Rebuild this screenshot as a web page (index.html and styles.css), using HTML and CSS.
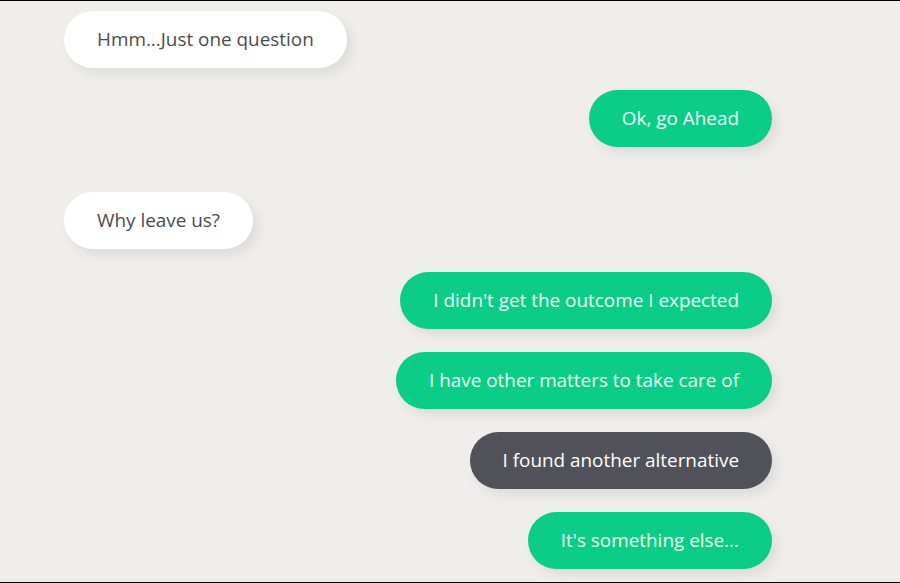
FILE: index.html
```html
<!DOCTYPE html>
<html>
<head>
<meta charset="utf-8">
<link rel="stylesheet" href="styles.css">
</head>
<body>
<div class="frame">
  <div class="chat">
    <div class="row left first"><div class="bubble bot">Hmm...Just one question</div></div>
    <div class="row right second"><div class="bubble user">Ok, go Ahead</div></div>
    <div class="row left"><div class="bubble bot">Why leave us?</div></div>
    <div class="row right"><div class="bubble user">I didn't get the outcome I expected</div></div>
    <div class="row right"><div class="bubble user">I have other matters to take care of</div></div>
    <div class="row right"><div class="bubble dark">I found another alternative</div></div>
    <div class="row right"><div class="bubble user">It's something else...</div></div>
  </div>
</div>
</body>
</html>
```
FILE: styles.css
```css
html, body {
  margin: 0;
  padding: 0;
}
body {
  width: 900px;
  height: 583px;
  overflow: hidden;
  background: #efeeec;
}
.frame {
  box-sizing: border-box;
  height: 583px;
  border-top: 1px solid #000;
  border-bottom: 1px solid #000;
  background: #efeeec;
}
.chat {
  display: flex;
  flex-direction: column;
  padding: 10px 128px 0 64px;
  font-family: "Open Sans", sans-serif;
  font-size: 18.9px;
  font-weight: 500;
}
.row {
  display: flex;
  margin-bottom: 23px;
}
.row.first { margin-bottom: 22px; }
.row.second { margin-bottom: 45px; }
.left { justify-content: flex-start; }
.right { justify-content: flex-end; }
.bubble {
  height: 57px;
  box-sizing: border-box;
  display: flex;
  align-items: center;
  padding: 0 33px 1px;
  border-radius: 29px;
  box-shadow: 5px 6px 12px rgba(0, 0, 0, 0.08);
  white-space: nowrap;
}
.bot {
  background: #ffffff;
  color: #4b4c50;
  font-weight: 400;
}
.user {
  background: #0ccd88;
  color: #eafff5;
}
.dark {
  background: #515259;
  color: #ffffff;
}
```
